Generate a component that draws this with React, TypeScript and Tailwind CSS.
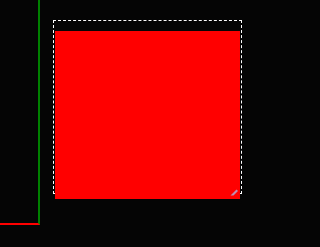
import React from "react";

export default function App() {
  return (
    <div className="flex h-[247px] w-full items-start overflow-hidden bg-[#050505]">
      <div className="h-[225px] w-[40px] shrink-0 border-r-2 border-b-2 border-r-[#008000] border-b-[#ff0000]" />
      <div className="ml-[13px] mt-[20px] h-[174px] w-[189px] shrink-0 border border-dashed border-white">
        <div className="relative ml-[1px] mt-[10px] h-[168px] w-[185px] bg-[#ff0000]">
          <svg
            className="absolute left-[175px] top-[158px]"
            width="8"
            height="7"
            viewBox="0 0 8 7"
          >
            <path d="M0.5 6.5 L6.5 0.5 L7.5 1.5 L7.5 2.5 L3.5 6.5 Z" fill="#b89cc4" opacity="0.9" />
          </svg>
        </div>
      </div>
    </div>
  );
}
